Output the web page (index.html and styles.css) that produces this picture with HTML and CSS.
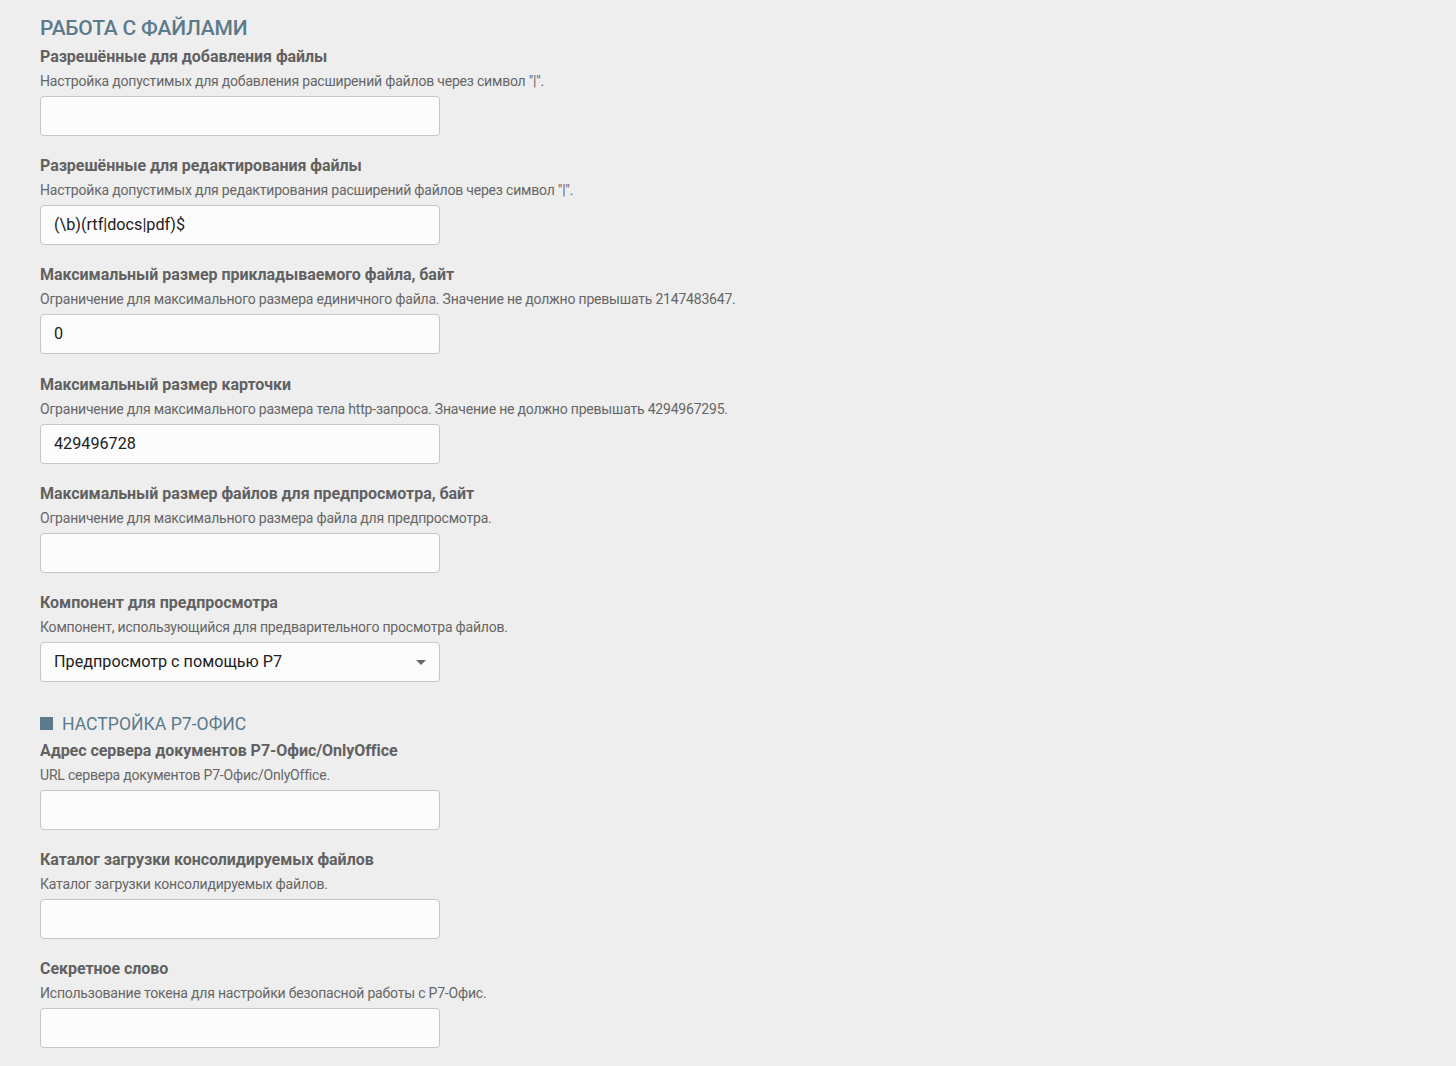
FILE: index.html
```html
<!DOCTYPE html>
<html lang="ru">
<head>
<meta charset="utf-8">
<title>Работа с файлами</title>
<link rel="stylesheet" href="styles.css">
</head>
<body>
<main class="page">
  <h1 class="title">РАБОТА С ФАЙЛАМИ</h1>

  <div class="field">
    <div class="label">Разрешённые для добавления файлы</div>
    <div class="desc">Настройка допустимых для добавления расширений файлов через символ "|".</div>
    <div class="input"></div>
  </div>

  <div class="field">
    <div class="label">Разрешённые для редактирования файлы</div>
    <div class="desc">Настройка допустимых для редактирования расширений файлов через символ "|".</div>
    <div class="input">(\b)(rtf|docs|pdf)$</div>
  </div>

  <div class="field">
    <div class="label">Максимальный размер прикладываемого файла, байт</div>
    <div class="desc">Ограничение для максимального размера единичного файла. Значение не должно превышать 2147483647.</div>
    <div class="input">0</div>
  </div>

  <div class="field">
    <div class="label">Максимальный размер карточки</div>
    <div class="desc">Ограничение для максимального размера тела http-запроса. Значение не должно превышать 4294967295.</div>
    <div class="input">429496728</div>
  </div>

  <div class="field">
    <div class="label">Максимальный размер файлов для предпросмотра, байт</div>
    <div class="desc">Ограничение для максимального размера файла для предпросмотра.</div>
    <div class="input"></div>
  </div>

  <div class="field">
    <div class="label">Компонент для предпросмотра</div>
    <div class="desc">Компонент, использующийся для предварительного просмотра файлов.</div>
    <div class="input select"><span>Предпросмотр с помощью Р7</span><span class="arrow"></span></div>
  </div>

  <h2 class="subtitle"><span class="square"></span>НАСТРОЙКА Р7-ОФИС</h2>

  <div class="field">
    <div class="label">Адрес сервера документов Р7-Офис/OnlyOffice</div>
    <div class="desc">URL сервера документов Р7-Офис/OnlyOffice.</div>
    <div class="input"></div>
  </div>

  <div class="field">
    <div class="label">Каталог загрузки консолидируемых файлов</div>
    <div class="desc">Каталог загрузки консолидируемых файлов.</div>
    <div class="input"></div>
  </div>

  <div class="field">
    <div class="label">Секретное слово</div>
    <div class="desc">Использование токена для настройки безопасной работы с Р7-Офис.</div>
    <div class="input"></div>
  </div>
</main>
</body>
</html>
```
FILE: styles.css
```css
html, body {
  margin: 0;
  padding: 0;
  background: #eeeeee;
}
body {
  font-family: Roboto, "Noto Sans", sans-serif;
  color: #616161;
}
.page {
  padding: 14px 40px 0 40px;
}
.title {
  margin: 0;
  font-size: 21px;
  line-height: 28px;
  font-weight: 500;
  color: #5b7a8c;
  letter-spacing: -0.2px;
}
.field {
  margin-bottom: 20.2px;
}
.title + .field {
  margin-top: 5px;
}
.label {
  font-size: 16px;
  line-height: 20px;
  font-weight: 700;
  color: #616161;
  letter-spacing: -0.05px;
}
.desc {
  font-size: 14px;
  line-height: 20px;
  margin-top: 4px;
  color: #666666;
  letter-spacing: -0.2px;
}
.input {
  margin-top: 5px;
  box-sizing: border-box;
  width: 400px;
  height: 40px;
  border: 1px solid #c6c6c6;
  border-radius: 4px;
  background: #fcfcfc;
  padding: 0 13px;
  font-size: 16.2px;
  line-height: 38px;
  color: #212121;
}
.select {
  display: flex;
  align-items: center;
  justify-content: space-between;
}
.arrow {
  width: 0;
  height: 0;
  border-left: 5px solid transparent;
  border-right: 5px solid transparent;
  border-top: 5px solid #666666;
  margin-top: 1px;
}
.subtitle {
  margin: 31px 0 0 0;
  display: flex;
  align-items: center;
  font-size: 17.6px;
  line-height: 22px;
  font-weight: 400;
  color: #5b7a8c;
}
.square {
  width: 13px;
  height: 13px;
  background: #5b7a8c;
  margin-right: 9px;
}
.subtitle + .field {
  margin-top: 6px;
}
```
